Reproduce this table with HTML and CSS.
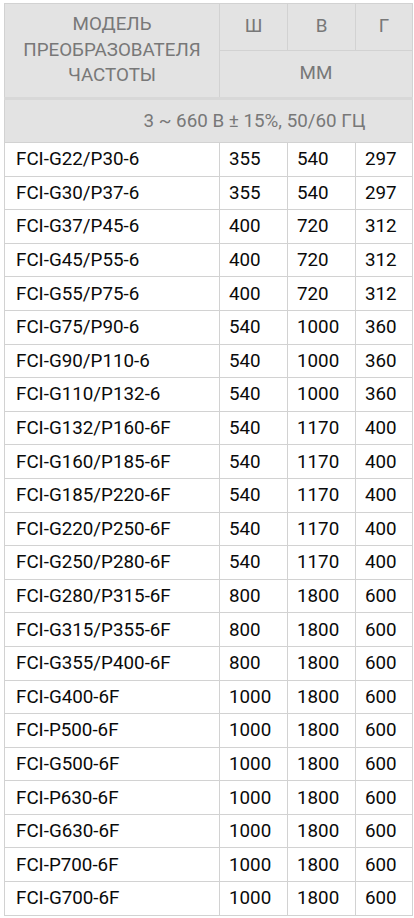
FILE: index.html
```html
<!DOCTYPE html>
<html lang="ru">
<head>
<meta charset="utf-8">
<title>Габариты</title>
<link rel="stylesheet" href="styles.css">
</head>
<body>
<div class="wrap">
<table class="dims">
<colgroup>
<col class="c-model"><col class="c-w"><col class="c-h"><col class="c-d">
</colgroup>
<thead>
<tr class="h1">
<th rowspan="2" class="model-h">МОДЕЛЬ<br>ПРЕОБРАЗОВАТЕЛЯ<br>ЧАСТОТЫ</th>
<th>Ш</th><th>В</th><th>Г</th>
</tr>
<tr class="h2"><th colspan="3">ММ</th></tr>
</thead>
<tbody>
<tr class="sub"><td colspan="4">3 ~ 660 В ± 15%, 50/60 ГЦ</td></tr>
<tr><td>FCI-G22/P30-6</td><td>355</td><td>540</td><td>297</td></tr>
<tr><td>FCI-G30/P37-6</td><td>355</td><td>540</td><td>297</td></tr>
<tr><td>FCI-G37/P45-6</td><td>400</td><td>720</td><td>312</td></tr>
<tr><td>FCI-G45/P55-6</td><td>400</td><td>720</td><td>312</td></tr>
<tr><td>FCI-G55/P75-6</td><td>400</td><td>720</td><td>312</td></tr>
<tr><td>FCI-G75/P90-6</td><td>540</td><td>1000</td><td>360</td></tr>
<tr><td>FCI-G90/P110-6</td><td>540</td><td>1000</td><td>360</td></tr>
<tr><td>FCI-G110/P132-6</td><td>540</td><td>1000</td><td>360</td></tr>
<tr><td>FCI-G132/P160-6F</td><td>540</td><td>1170</td><td>400</td></tr>
<tr><td>FCI-G160/P185-6F</td><td>540</td><td>1170</td><td>400</td></tr>
<tr><td>FCI-G185/P220-6F</td><td>540</td><td>1170</td><td>400</td></tr>
<tr><td>FCI-G220/P250-6F</td><td>540</td><td>1170</td><td>400</td></tr>
<tr><td>FCI-G250/P280-6F</td><td>540</td><td>1170</td><td>400</td></tr>
<tr><td>FCI-G280/P315-6F</td><td>800</td><td>1800</td><td>600</td></tr>
<tr><td>FCI-G315/P355-6F</td><td>800</td><td>1800</td><td>600</td></tr>
<tr><td>FCI-G355/P400-6F</td><td>800</td><td>1800</td><td>600</td></tr>
<tr><td>FCI-G400-6F</td><td>1000</td><td>1800</td><td>600</td></tr>
<tr><td>FCI-P500-6F</td><td>1000</td><td>1800</td><td>600</td></tr>
<tr><td>FCI-G500-6F</td><td>1000</td><td>1800</td><td>600</td></tr>
<tr><td>FCI-P630-6F</td><td>1000</td><td>1800</td><td>600</td></tr>
<tr><td>FCI-G630-6F</td><td>1000</td><td>1800</td><td>600</td></tr>
<tr><td>FCI-P700-6F</td><td>1000</td><td>1800</td><td>600</td></tr>
<tr><td>FCI-G700-6F</td><td>1000</td><td>1800</td><td>600</td></tr>
</tbody>
</table>
</div>
</body>
</html>
```

FILE: styles.css
```css
html, body {
  margin: 0;
  padding: 0;
  background: #ffffff;
}
.wrap {
  padding: 3px 0 0 4px;
}
.dims {
  border-collapse: collapse;
  table-layout: fixed;
  width: 408px;
  font-family: Roboto, "Liberation Sans", sans-serif;
  font-size: 18.8px;
  color: #0a0a0a;
}
.c-model { width: 215px; }
.c-w { width: 68px; }
.c-h { width: 68px; }
.c-d { width: 57px; }
.dims th, .dims td {
  border: 1px solid #d2d2d2;
  padding: 0 9px;
}
.dims th {
  background: #e3e3e3;
  color: #787878;
  font-weight: 400;
  text-align: center;
  line-height: 25.5px;
}
.h1 th { height: 46px; }
.h2 th { height: 46px; }
.dims .model-h { padding: 0; }
.dims .sub td {
  background: #e3e3e3;
  color: #787878;
  height: 42px;
  text-align: center;
  padding: 0 0 0 92px;
  border-top: 3px solid #d8d8d8;
}
tbody td {
  height: 32.6px;
  line-height: 20px;
}
tbody td:first-child {
  padding-left: 11px;
}
```
